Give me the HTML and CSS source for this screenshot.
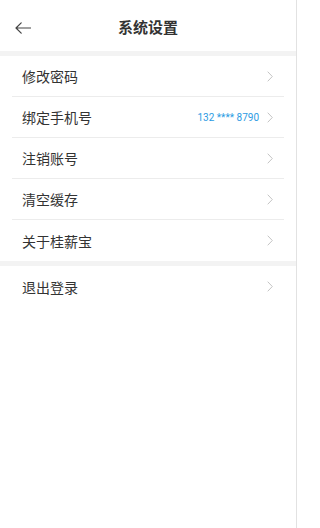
FILE: index.html
```html
<!DOCTYPE html>
<html lang="zh">
<head>
<meta charset="utf-8">
<link rel="stylesheet" href="styles.css">
</head>
<body>
<div class="page">
  <header class="topbar">
    <span class="back">
      <svg width="16" height="12" viewBox="0 0 16 12"><path d="M15.5 6H1M6.2 0.8L1 6l5.2 5.2" fill="none" stroke="#444" stroke-width="1.2" stroke-linecap="round" stroke-linejoin="round"/></svg>
    </span>
    <h1 class="title">系统设置</h1>
  </header>
  <section class="group">
    <div class="row"><span class="label">修改密码</span><span class="right"><svg class="chev" width="6" height="11" viewBox="0 0 6 11"><path d="M0.7 0.7l4.6 4.8-4.6 4.8" fill="none" stroke="#c4c4c4" stroke-width="1"/></svg></span></div>
    <div class="row"><span class="label">绑定手机号</span><span class="right"><span class="phone">132 **** 8790</span><svg class="chev" width="6" height="11" viewBox="0 0 6 11"><path d="M0.7 0.7l4.6 4.8-4.6 4.8" fill="none" stroke="#c4c4c4" stroke-width="1"/></svg></span></div>
    <div class="row"><span class="label">注销账号</span><span class="right"><svg class="chev" width="6" height="11" viewBox="0 0 6 11"><path d="M0.7 0.7l4.6 4.8-4.6 4.8" fill="none" stroke="#c4c4c4" stroke-width="1"/></svg></span></div>
    <div class="row"><span class="label">清空缓存</span><span class="right"><svg class="chev" width="6" height="11" viewBox="0 0 6 11"><path d="M0.7 0.7l4.6 4.8-4.6 4.8" fill="none" stroke="#c4c4c4" stroke-width="1"/></svg></span></div>
    <div class="row last"><span class="label">关于桂薪宝</span><span class="right"><svg class="chev" width="6" height="11" viewBox="0 0 6 11"><path d="M0.7 0.7l4.6 4.8-4.6 4.8" fill="none" stroke="#c4c4c4" stroke-width="1"/></svg></span></div>
  </section>
  <section class="group">
    <div class="row last"><span class="label">退出登录</span><span class="right"><svg class="chev" width="6" height="11" viewBox="0 0 6 11"><path d="M0.7 0.7l4.6 4.8-4.6 4.8" fill="none" stroke="#c4c4c4" stroke-width="1"/></svg></span></div>
  </section>
</div>
</body>
</html>
```
FILE: styles.css
```css
* { box-sizing: border-box; }
html, body { margin: 0; padding: 0; background: #fff; }
body { font-family: "Noto Sans CJK SC", "Noto Sans", sans-serif; color: #333; }
.page {
  width: 297px;
  min-height: 528px;
  border-right: 1px solid #e2e2e2;
  background: #fff;
  display: flex;
  flex-direction: column;
}
.topbar {
  height: 56px;
  display: flex;
  align-items: center;
  justify-content: center;
  position: relative;
  border-bottom: 5px solid #f3f3f3;
}
.back {
  position: absolute;
  left: 15px;
  top: 22px;
  display: flex;
}
.title {
  margin: 0;
  font-size: 15px;
  font-weight: 700;
  color: #333;
  line-height: 20px;
  margin-top: 3px;
}
.group {
  border-bottom: 5px solid #f3f3f3;
}
.group:last-child { border-bottom: none; }
.row {
  height: 41px;
  margin: 0 12px;
  padding: 0 11px 0 10px;
  display: flex;
  align-items: center;
  justify-content: space-between;
  border-bottom: 1px solid #ececec;
}
.row.last { border-bottom: none; }
.label {
  font-size: 14px;
  color: #333;
}
.right {
  display: flex;
  align-items: center;
  gap: 8px;
}
.phone {
  font-family: "Roboto", "Liberation Sans", sans-serif;
  font-size: 10px;
  color: #2b9be3;
}
.chev { display: block; }
```
